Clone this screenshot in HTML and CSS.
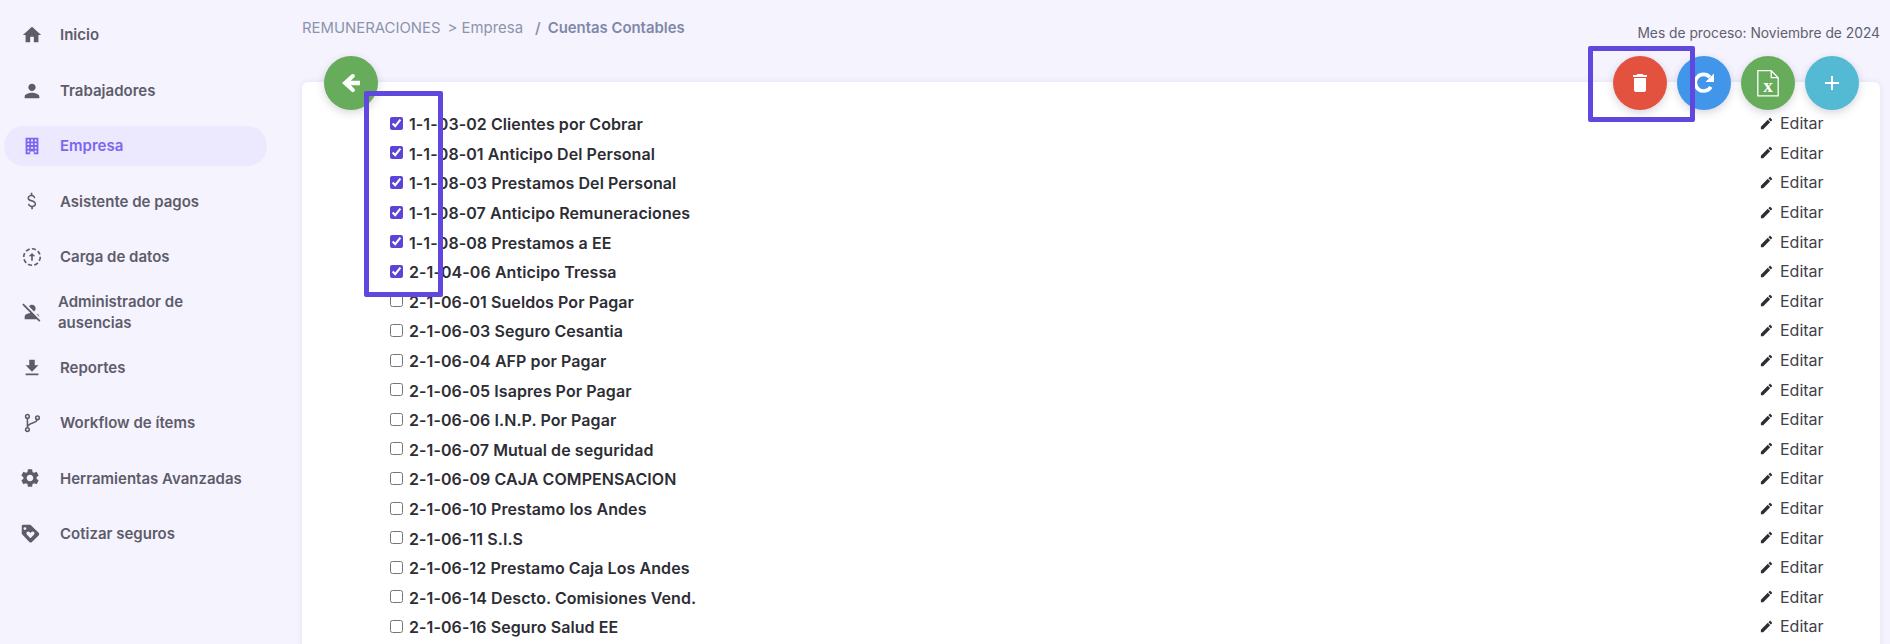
FILE: index.html
```html
<!DOCTYPE html>
<html lang="es">
<head>
<meta charset="utf-8">
<title>Cuentas Contables</title>
<link rel="stylesheet" href="styles.css">
</head>
<body>
<div class="app">
  <nav class="sidebar">
    <a class="nav-item"><svg class="nav-icon" viewBox="0 0 24 24"><path d="M10 20v-6h4v6h5v-8h3L12 3 2 12h3v8z"/></svg><span>Inicio</span></a>
    <a class="nav-item"><svg class="nav-icon" viewBox="0 0 24 24"><path d="M12 12c2.21 0 4-1.79 4-4s-1.79-4-4-4-4 1.79-4 4 1.79 4 4 4zm0 2c-2.67 0-8 1.34-8 4v2h16v-2c0-2.66-5.33-4-8-4z"/></svg><span>Trabajadores</span></a>
    <a class="nav-item active"><svg class="nav-icon" viewBox="0 0 24 24"><path fill-rule="evenodd" d="M5 3h14v18h-5v-3h-4v3H5zM7 5v2h2V5zm4 0v2h2V5zm4 0v2h2V5zM7 9v2h2V9zm4 0v2h2V9zm4 0v2h2V9zM7 13v2h2v-2zm4 0v2h2v-2zm4 0v2h2v-2zM7 17v2h2v-2zm8 0v2h2v-2z"/></svg><span>Empresa</span></a>
    <a class="nav-item"><svg class="nav-icon" viewBox="0 0 24 24"><path d="M11.8 10.9c-2.27-.59-3-1.2-3-2.15 0-1.09 1.01-1.85 2.7-1.85 1.78 0 2.44.85 2.5 2.1h1.6c-.07-1.72-1.12-3.3-3.21-3.81V3h-1.8v2.16c-1.94.42-3.5 1.68-3.5 3.61 0 2.31 1.91 3.46 4.7 4.13 2.5.6 3 1.48 3 2.41 0 .69-.49 1.79-2.7 1.79-2.06 0-2.87-.92-2.98-2.1H7.5c.12 2.19 1.76 3.42 3.68 3.83V21h1.8v-2.15c1.95-.37 3.5-1.5 3.5-3.55 0-2.84-2.43-3.81-4.68-4.4z"/></svg><span>Asistente de pagos</span></a>
    <a class="nav-item"><svg class="nav-icon" viewBox="0 0 24 24"><circle class="dash" cx="12" cy="12" r="9"/><path d="M12 7.5l3.6 3.8h-2.7V16h-1.8v-4.7H8.4z"/></svg><span>Carga de datos</span></a>
    <a class="nav-item two-line"><svg class="nav-icon" viewBox="0 0 24 24"><path d="M8.65 5.82C9.36 4.72 10.6 4 12 4c2.21 0 4 1.79 4 4 0 1.4-.72 2.64-1.82 3.35L8.65 5.82zM20 17.17c-.02-1.1-.63-2.11-1.61-2.62-.54-.28-1.13-.54-1.77-.76L20 17.17zm1.19 4.02L2.81 2.81 1.39 4.22l8.89 8.89c-1.81.23-3.39.79-4.67 1.45C4.61 15.07 4 16.1 4 17.22V20h13.17l2.61 2.61 1.41-1.42z"/></svg><span>Administrador de ausencias</span></a>
    <a class="nav-item"><svg class="nav-icon" viewBox="0 0 24 24"><path d="M5 20h14v-2H5v2zM19 9h-4V3H9v6H5l7 7 7-7z"/></svg><span>Reportes</span></a>
    <a class="nav-item"><svg class="nav-icon" viewBox="0 0 24 24"><path class="line" d="M7 7v10M17.5 8.5c0 4-10.5 3-10.5 8"/><circle class="line" cx="7" cy="4.8" r="2"/><circle class="line" cx="7" cy="19.2" r="2"/><circle class="line" cx="18" cy="6.3" r="2"/></svg><span>Workflow de ítems</span></a>
    <a class="nav-item"><svg class="nav-icon shift" viewBox="0 0 24 24"><path d="M19.14 12.94c.04-.3.06-.61.06-.94 0-.32-.02-.64-.07-.94l2.03-1.58c.18-.14.23-.41.12-.61l-1.92-3.32c-.12-.22-.37-.29-.59-.22l-2.39.96c-.5-.38-1.03-.7-1.62-.94l-.36-2.54c-.04-.24-.24-.41-.48-.41h-3.84c-.24 0-.43.17-.47.41l-.36 2.54c-.59.24-1.13.57-1.62.94l-2.39-.96c-.22-.08-.47 0-.59.22L2.74 8.87c-.12.21-.08.47.12.61l2.03 1.58c-.05.3-.09.63-.09.94s.02.64.07.94l-2.03 1.58c-.18.14-.23.41-.12.61l1.92 3.32c.12.22.37.29.59.22l2.39-.96c.5.38 1.03.7 1.62.94l.36 2.54c.05.24.24.41.48.41h3.84c.24 0 .44-.17.47-.41l.36-2.54c.59-.24 1.13-.56 1.62-.94l2.39.96c.22.08.47 0 .59-.22l1.92-3.32c.12-.22.07-.47-.12-.61l-2.01-1.58zM12 15.6c-1.98 0-3.6-1.62-3.6-3.6s1.62-3.6 3.6-3.6 3.6 1.62 3.6 3.6-1.62 3.6-3.6 3.6z"/></svg><span>Herramientas Avanzadas</span></a>
    <a class="nav-item"><svg class="nav-icon shift" viewBox="0 0 24 24"><path fill-rule="evenodd" d="M3 3.5C3 2.7 3.7 2 4.5 2h7.3c.6 0 1.1.2 1.5.6l8.100 8.100c.8.8.8 2 0 2.800l-7.300 7.300c-.8.8-2 .8-2.800 0L3.600 12.600c-.4-.4-.6-.9-.6-1.500zM6.500 4.500a1.600 1.600 0 1 0 0 3.200 1.600 1.600 0 0 0 0-3.200zM12.500 16.500l3.700-3.700c.9-.9.9-2.200.1-3-.8-.8-2-.8-2.800 0l-1 1-1-1c-.8-.8-2-.8-2.800 0-.8.8-.8 2.100.1 3z"/></svg><span>Cotizar seguros</span></a>
  </nav>
  <main class="main">
    <header class="topbar">
      <div class="crumbs"><span>REMUNERACIONES</span><span class="sep-a">&gt; Empresa</span><span class="sep-b">/</span><strong>Cuentas Contables</strong></div>
      <div class="period">Mes de proceso: Noviembre de 2024</div>
    </header>
    <div class="fabs">
      <button class="fab green back" type="button"><svg viewBox="0 0 24 24"><path d="M21 10h-9.200l3.500-3.500c.8-.8.8-2 0-2.800s-2-.8-2.800 0L3 12.200l9.500 8.600c.8.8 2 .8 2.800 0s.8-2 0-2.800L11.800 14.500H21z" transform="translate(0 -.2)"/></svg></button>
      <div class="fab-group">
        <button class="fab red" type="button"><svg viewBox="0 0 24 24"><path d="M6 19c0 1.100.9 2 2 2h8c1.100 0 2-.9 2-2V7H6v12zM19 4h-3.500l-1-1h-5l-1 1H5v2h14V4z"/></svg></button>
        <button class="fab blue" type="button"><svg viewBox="0 0 24 24"><path class="arc" d="M18.800 15.800A8.300 8.300 0 1 1 17.800 6.200"/><path d="M22 2.500v8.500H13.500z"/></svg></button>
        <button class="fab green" type="button"><svg class="xls" viewBox="0 0 24 28"><path class="sheet" d="M2.500 2.500h12.500l6.500 6.500v17H2.500zM15 2.500V9h6.500"/><text class="xls-mark" x="12" y="22.500">x</text></svg></button>
        <button class="fab cyan" type="button"><svg viewBox="0 0 24 24"><path d="M19 13h-6v6h-2v-6H5v-2h6V5h2v6h6z"/></svg></button>
      </div>
    </div>
    <section class="card">
      <ul class="list">
        <li class="row"><label><input type="checkbox" checked>1-1-03-02 Clientes por Cobrar</label><a class="edit"><svg viewBox="0 0 24 24"><path d="M3 17.250V21h3.750L17.810 9.940l-3.750-3.750L3 17.250zM20.710 7.040c.39-.39.39-1.020 0-1.410l-2.340-2.340c-.39-.39-1.020-.39-1.410 0l-1.830 1.830 3.750 3.750 1.830-1.830z"/></svg>Editar</a></li>
        <li class="row"><label><input type="checkbox" checked>1-1-08-01 Anticipo Del Personal</label><a class="edit"><svg viewBox="0 0 24 24"><path d="M3 17.250V21h3.750L17.810 9.940l-3.750-3.750L3 17.250zM20.710 7.040c.39-.39.39-1.020 0-1.410l-2.340-2.340c-.39-.39-1.020-.39-1.410 0l-1.830 1.830 3.750 3.750 1.830-1.830z"/></svg>Editar</a></li>
        <li class="row"><label><input type="checkbox" checked>1-1-08-03 Prestamos Del Personal</label><a class="edit"><svg viewBox="0 0 24 24"><path d="M3 17.250V21h3.750L17.810 9.940l-3.750-3.750L3 17.250zM20.710 7.040c.39-.39.39-1.020 0-1.410l-2.340-2.340c-.39-.39-1.020-.39-1.410 0l-1.830 1.830 3.750 3.750 1.830-1.830z"/></svg>Editar</a></li>
        <li class="row"><label><input type="checkbox" checked>1-1-08-07 Anticipo Remuneraciones</label><a class="edit"><svg viewBox="0 0 24 24"><path d="M3 17.250V21h3.750L17.810 9.940l-3.750-3.750L3 17.250zM20.710 7.040c.39-.39.39-1.020 0-1.410l-2.340-2.340c-.39-.39-1.020-.39-1.410 0l-1.830 1.830 3.750 3.750 1.830-1.830z"/></svg>Editar</a></li>
        <li class="row"><label><input type="checkbox" checked>1-1-08-08 Prestamos a EE</label><a class="edit"><svg viewBox="0 0 24 24"><path d="M3 17.250V21h3.750L17.810 9.940l-3.750-3.750L3 17.250zM20.710 7.040c.39-.39.39-1.020 0-1.410l-2.340-2.340c-.39-.39-1.020-.39-1.410 0l-1.830 1.830 3.750 3.750 1.830-1.830z"/></svg>Editar</a></li>
        <li class="row"><label><input type="checkbox" checked>2-1-04-06 Anticipo Tressa</label><a class="edit"><svg viewBox="0 0 24 24"><path d="M3 17.250V21h3.750L17.810 9.940l-3.750-3.750L3 17.250zM20.710 7.040c.39-.39.39-1.020 0-1.410l-2.340-2.340c-.39-.39-1.020-.39-1.410 0l-1.830 1.830 3.750 3.750 1.830-1.830z"/></svg>Editar</a></li>
        <li class="row"><label><input type="checkbox">2-1-06-01 Sueldos Por Pagar</label><a class="edit"><svg viewBox="0 0 24 24"><path d="M3 17.250V21h3.750L17.810 9.940l-3.750-3.750L3 17.250zM20.710 7.040c.39-.39.39-1.020 0-1.410l-2.340-2.340c-.39-.39-1.020-.39-1.410 0l-1.830 1.830 3.750 3.750 1.830-1.830z"/></svg>Editar</a></li>
        <li class="row"><label><input type="checkbox">2-1-06-03 Seguro Cesantia</label><a class="edit"><svg viewBox="0 0 24 24"><path d="M3 17.250V21h3.750L17.810 9.940l-3.750-3.750L3 17.250zM20.710 7.040c.39-.39.39-1.020 0-1.410l-2.340-2.340c-.39-.39-1.020-.39-1.410 0l-1.830 1.830 3.750 3.750 1.830-1.830z"/></svg>Editar</a></li>
        <li class="row"><label><input type="checkbox">2-1-06-04 AFP por Pagar</label><a class="edit"><svg viewBox="0 0 24 24"><path d="M3 17.250V21h3.750L17.810 9.940l-3.750-3.750L3 17.250zM20.710 7.040c.39-.39.39-1.020 0-1.410l-2.340-2.340c-.39-.39-1.020-.39-1.410 0l-1.830 1.830 3.750 3.750 1.830-1.830z"/></svg>Editar</a></li>
        <li class="row"><label><input type="checkbox">2-1-06-05 Isapres Por Pagar</label><a class="edit"><svg viewBox="0 0 24 24"><path d="M3 17.250V21h3.750L17.810 9.940l-3.750-3.750L3 17.250zM20.710 7.040c.39-.39.39-1.020 0-1.410l-2.340-2.340c-.39-.39-1.020-.39-1.410 0l-1.830 1.830 3.750 3.750 1.830-1.830z"/></svg>Editar</a></li>
        <li class="row"><label><input type="checkbox">2-1-06-06 I.N.P. Por Pagar</label><a class="edit"><svg viewBox="0 0 24 24"><path d="M3 17.250V21h3.750L17.810 9.940l-3.750-3.750L3 17.250zM20.710 7.040c.39-.39.39-1.020 0-1.410l-2.340-2.340c-.39-.39-1.020-.39-1.410 0l-1.830 1.830 3.750 3.750 1.830-1.830z"/></svg>Editar</a></li>
        <li class="row"><label><input type="checkbox">2-1-06-07 Mutual de seguridad</label><a class="edit"><svg viewBox="0 0 24 24"><path d="M3 17.250V21h3.750L17.810 9.940l-3.750-3.750L3 17.250zM20.710 7.040c.39-.39.39-1.020 0-1.410l-2.340-2.340c-.39-.39-1.020-.39-1.410 0l-1.830 1.830 3.750 3.750 1.830-1.830z"/></svg>Editar</a></li>
        <li class="row"><label><input type="checkbox">2-1-06-09 CAJA COMPENSACION</label><a class="edit"><svg viewBox="0 0 24 24"><path d="M3 17.250V21h3.750L17.810 9.940l-3.750-3.750L3 17.250zM20.710 7.040c.39-.39.39-1.020 0-1.410l-2.340-2.340c-.39-.39-1.020-.39-1.410 0l-1.830 1.830 3.750 3.750 1.830-1.830z"/></svg>Editar</a></li>
        <li class="row"><label><input type="checkbox">2-1-06-10 Prestamo los Andes</label><a class="edit"><svg viewBox="0 0 24 24"><path d="M3 17.250V21h3.750L17.810 9.940l-3.750-3.750L3 17.250zM20.710 7.040c.39-.39.39-1.020 0-1.410l-2.340-2.340c-.39-.39-1.020-.39-1.410 0l-1.830 1.830 3.750 3.750 1.830-1.830z"/></svg>Editar</a></li>
        <li class="row"><label><input type="checkbox">2-1-06-11 S.I.S</label><a class="edit"><svg viewBox="0 0 24 24"><path d="M3 17.250V21h3.750L17.810 9.940l-3.750-3.750L3 17.250zM20.710 7.040c.39-.39.39-1.020 0-1.410l-2.340-2.340c-.39-.39-1.020-.39-1.410 0l-1.830 1.830 3.750 3.750 1.830-1.830z"/></svg>Editar</a></li>
        <li class="row"><label><input type="checkbox">2-1-06-12 Prestamo Caja Los Andes</label><a class="edit"><svg viewBox="0 0 24 24"><path d="M3 17.250V21h3.750L17.810 9.940l-3.750-3.750L3 17.250zM20.710 7.040c.39-.39.39-1.020 0-1.410l-2.340-2.340c-.39-.39-1.020-.39-1.410 0l-1.830 1.830 3.750 3.750 1.830-1.830z"/></svg>Editar</a></li>
        <li class="row"><label><input type="checkbox">2-1-06-14 Descto. Comisiones Vend.</label><a class="edit"><svg viewBox="0 0 24 24"><path d="M3 17.250V21h3.750L17.810 9.940l-3.750-3.750L3 17.250zM20.710 7.040c.39-.39.39-1.020 0-1.410l-2.340-2.340c-.39-.39-1.020-.39-1.410 0l-1.830 1.830 3.750 3.750 1.830-1.830z"/></svg>Editar</a></li>
        <li class="row"><label><input type="checkbox">2-1-06-16 Seguro Salud EE</label><a class="edit"><svg viewBox="0 0 24 24"><path d="M3 17.250V21h3.750L17.810 9.940l-3.750-3.750L3 17.250zM20.710 7.040c.39-.39.39-1.020 0-1.410l-2.340-2.340c-.39-.39-1.020-.39-1.410 0l-1.830 1.830 3.750 3.750 1.830-1.830z"/></svg>Editar</a></li>
      </ul>
    </section>
  </main>
  <div class="mark mark-checks"></div>
  <div class="mark mark-delete"></div>
</div>
</body>
</html>
```
FILE: styles.css
```css
* { box-sizing: border-box; }
html, body { margin: 0; height: 100%; overflow: hidden; }
body { background: #f5f3fe; font-family: Inter, "Liberation Sans", sans-serif; color: #2b2b33; }
.app { position: relative; display: flex; height: 644px; overflow: hidden; }

.sidebar { width: 302px; flex: none; padding-top: 7.500px; display: flex; flex-direction: column; }
.nav-item { display: flex; align-items: center; height: 55.400px; padding-left: 20px; margin-left: 4px; width: 263px; font-size: 15px; font-weight: 600; color: #5d5c6a; border-radius: 20px; position: relative; }
.nav-item span { margin-left: 17px; line-height: 21.500px; }
.nav-icon { width: 22px; height: 22px; flex: none; fill: #5d5c6a; margin-left: -3px; }
.nav-icon.shift { margin-left: -5px; margin-right: 2px; }
.two-line span { margin-left: 15px; width: 170px; }
.active { color: #7c66ee; }
.active::before { content: ""; position: absolute; left: 0; right: 0; top: 8px; bottom: 8px; background: #ece8fd; border-radius: 20px; }
.active span, .active svg { position: relative; }
.active .nav-icon { fill: #7c66ee; }
.dash { fill: none; stroke: #5d5c6a; stroke-width: 1.800; stroke-dasharray: 4.500 2.500; }
.line { fill: none; stroke: #5d5c6a; stroke-width: 1.700; }

.main { position: relative; flex: 1; min-width: 0; padding-right: 10px; }
.topbar { display: flex; justify-content: space-between; height: 82px; }
.crumbs { padding-top: 19px; font-size: 14.900px; color: #8c93ad; line-height: 18px; display: flex; }
.crumbs strong { font-weight: 600; color: #7f88a8; }
.sep-a { margin-left: 7px; }
.sep-b { margin-left: 12px; margin-right: 7px; font-weight: 600; }
.period { padding-top: 24px; font-size: 13.800px; line-height: 18px; color: #60606e; }

.fabs { position: absolute; left: 22px; right: 31px; top: 56px; display: flex; justify-content: space-between; z-index: 2; }
.fab-group { display: flex; gap: 10px; }
.fab { width: 54px; height: 54px; border: 0; border-radius: 50%; padding: 0; display: flex; align-items: center; justify-content: center; box-shadow: 0 3px 8px rgba(60, 50, 90, .2); }
.fab svg { width: 24px; height: 24px; fill: #fff; }
.fab .xls { width: 26px; height: 30px; fill: none; }
.green { background: #66ac5b; }
.red { background: #e2523f; }
.blue { background: #4296ea; }
.cyan { background: #54b9d2; }
.arc { fill: none; stroke: #fff; stroke-width: 3.700; }
.sheet { fill: none; stroke: #fff; stroke-width: 1.200; }
.xls-mark { font-family: "Liberation Serif", serif; font-size: 18px; font-weight: 700; fill: #fff; text-anchor: middle; }

.card { background: #fff; height: 600px; border-radius: 6px 6px 0 0; box-shadow: 0 0 6px rgba(90, 80, 140, .1); }
.list { list-style: none; margin: 0; padding: 27.500px 54px 0 88px; }
.row { display: flex; justify-content: space-between; align-items: center; height: 29.600px; }
.row label { display: flex; align-items: center; font-size: 16px; font-weight: 600; letter-spacing: .08px; color: #2d2d35; }
.row input { width: 13px; height: 13px; margin: 0 6px 2px 0; accent-color: #5b44d6; flex: none; }
.edit { display: flex; align-items: center; font-size: 16px; color: #3f3f4a; width: 67px; margin-bottom: 2px; }
.edit svg { width: 15px; height: 15px; fill: #2d2d35; margin-right: 6px; flex: none; }

.mark { position: absolute; border: 5px solid #6047dd; border-radius: 2px; z-index: 3; pointer-events: none; }
.mark-checks { left: 364px; top: 91px; width: 79px; height: 206px; }
.mark-delete { left: 1588px; top: 46px; width: 107px; height: 76px; }
```
